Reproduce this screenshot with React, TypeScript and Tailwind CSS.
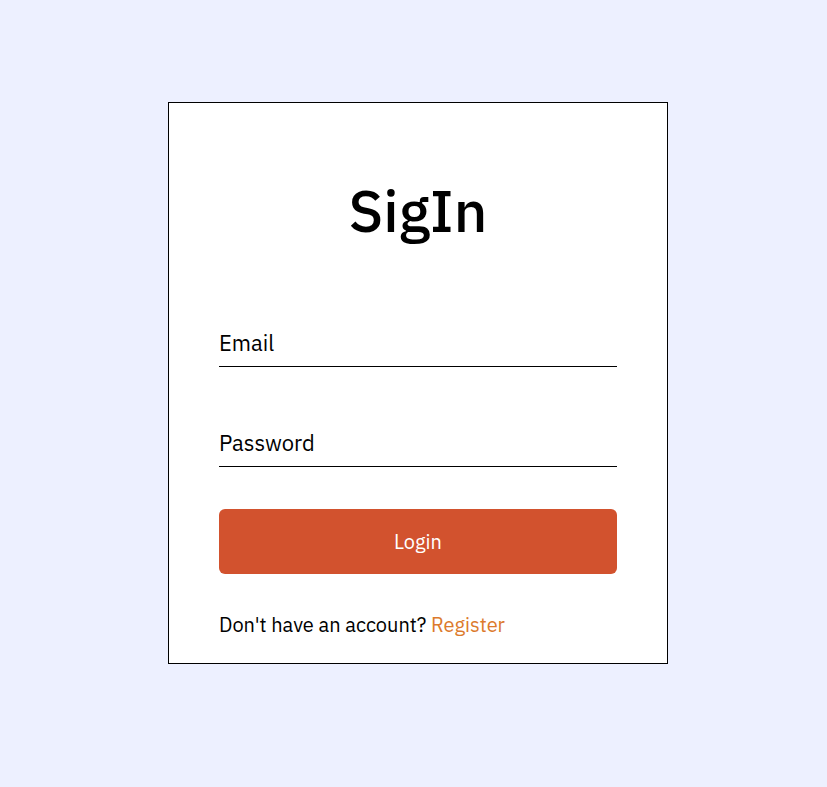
import React from "react";

export default function App() {
  return (
    <div className="min-h-[787px] bg-[#edf0ff] pt-[102px] pl-[9px] flex justify-center items-start font-['IBM_Plex_Sans','Noto_Sans',sans-serif]">
      <div className="w-[500px] border border-black bg-white px-[50px] pt-[68px] pb-[25px]">
        <h1 className="text-center text-[58px] leading-[80px] font-medium text-black">SigIn</h1>

        <form className="mt-[77px]" onSubmit={(e) => e.preventDefault()}>
          <input
            type="email"
            placeholder="Email"
            className="block w-full border-b border-black pb-[8px] text-[22px] leading-[30px] text-black placeholder:text-black outline-none"
          />
          <input
            type="password"
            placeholder="Password"
            className="mt-[61px] block w-full border-b border-black pb-[8px] text-[22px] leading-[30px] text-black placeholder:text-black outline-none"
          />
          <button
            type="submit"
            className="mt-[42px] w-full h-[65px] rounded-[6px] bg-[#d2522e] text-white text-[20px]"
          >
            Login
          </button>
        </form>

        <p className="mt-[38px] text-[20px] leading-[26px] text-black">
          Don't have an account? <a href="#" className="text-[#dc7a2c]">Register</a>
        </p>
      </div>
    </div>
  );
}
